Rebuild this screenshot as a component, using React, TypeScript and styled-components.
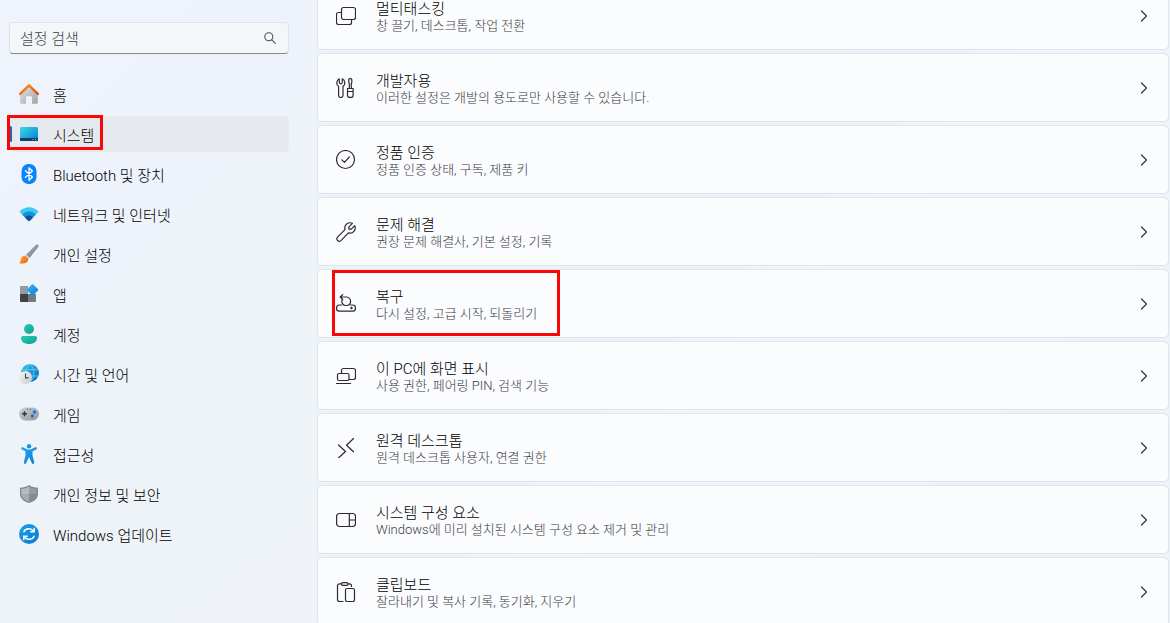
import React from 'react';
import styled, { createGlobalStyle } from 'styled-components';

const GlobalStyle = createGlobalStyle`
  * { box-sizing: border-box; }
  body {
    margin: 0;
    color: #000;
    font-family: Roboto, "Noto Sans CJK KR", sans-serif;
    font-weight: 300;
  }
  button, input { font: inherit; color: inherit; }
`;

const Shell = styled.div`
  display: grid;
  grid-template-columns: 289px 1fr;
  column-gap: 28px;
  height: 100vh;
  overflow: hidden;
  background: linear-gradient(135deg, #eef3fc 0%, #eef3fb 20%, #eef3f7 38%, #eff3fa 60%, #eef2fa 100%);
`;

const Sidebar = styled.aside`
  padding: 22px 0 0 9px;
`;

const SearchBox = styled.label`
  display: flex;
  align-items: center;
  height: 32px;
  padding: 0 12px 0 10px;
  border: 1px solid #e0e4e8;
  border-bottom-color: #868a8e;
  border-radius: 4px;
  background: #f3f7fa;
`;

const SearchInput = styled.input`
  flex: 1;
  min-width: 0;
  padding: 2px 0 0;
  border: 0;
  outline: 0;
  background: transparent;
  font-size: 15px;
  line-height: 20px;
  &::placeholder { color: #3c3f42; opacity: 1; }
`;

const NavList = styled.nav`
  display: flex;
  flex-direction: column;
  gap: 4px;
  margin-top: 22px;
`;

const NavItem = styled.a<{ $active?: boolean }>`
  position: relative;
  display: flex;
  align-items: center;
  gap: 14px;
  height: 36px;
  padding: 0 10px;
  border-radius: 5px;
  background: ${(p) => (p.$active ? '#e6eaee' : 'transparent')};
  color: inherit;
  font-size: 15px;
  line-height: 20px;
  text-decoration: none;
  white-space: nowrap;
`;

const NavLabel = styled.span`
  padding-top: 4px;
`;

const ActiveBar = styled.span`
  position: absolute;
  left: 0;
  top: 10px;
  width: 3px;
  height: 16px;
  border-radius: 2px;
  background: #2a62b0;
`;

const Highlight = styled.span<{ $left: number; $top: number; $width: number; $height: number }>`
  position: absolute;
  left: ${(p) => p.$left}px;
  top: ${(p) => p.$top}px;
  width: ${(p) => p.$width}px;
  height: ${(p) => p.$height}px;
  border: 3px solid #fc0606;
  pointer-events: none;
`;

const Content = styled.main`
  display: flex;
  flex-direction: column;
  gap: 3px;
  margin-top: -19px;
  padding-right: 1px;
`;

const Card = styled.button`
  position: relative;
  display: flex;
  align-items: center;
  flex-shrink: 0;
  gap: 20px;
  width: 100%;
  height: 69px;
  padding: 0 20px 0 18px;
  border: 1px solid #e0e5eb;
  border-radius: 5px;
  background: #fbfcfe;
  text-align: left;
`;

const CardText = styled.span`
  display: flex;
  flex: 1;
  flex-direction: column;
  min-width: 0;
  padding-top: 2px;
  white-space: nowrap;
`;

const CardTitle = styled.span`
  font-size: 15px;
  line-height: 18px;
`;

const CardNote = styled.span`
  color: #3a3b3e;
  font-size: 13px;
  line-height: 16px;
`;

const Icon = ({ children }: { children: React.ReactNode }) => (
  <svg width="20" height="20" viewBox="0 0 20 20" fill="none" aria-hidden="true">{children}</svg>
);

const LineIcon = ({ children }: { children: React.ReactNode }) => (
  <svg width="20" height="20" viewBox="0 0 20 20" fill="none" stroke="#2b2b2d" strokeWidth="1.2" strokeLinecap="round" strokeLinejoin="round" aria-hidden="true">{children}</svg>
);

const Gradient = ({ id, from, to }: { id: string; from: string; to: string }) => (
  <linearGradient id={id} x1="0" y1="0" x2="1" y2="1">
    <stop offset="0" stopColor={from} />
    <stop offset="1" stopColor={to} />
  </linearGradient>
);

const navItems: { label: string; active?: boolean; icon: React.ReactNode }[] = [
  {
    label: '홈',
    icon: (
      <Icon>
        <defs><Gradient id="house" from="#e4e4e4" to="#a2a2a2" /><Gradient id="roof" from="#fb9a1c" to="#d9480f" /></defs>
        <path d="M1.2 9.5 10 2l8.800 7.500V18.500a1.300 1.300 0 0 1-1.300 1.300H13V13.300a1 1 0 0 0-1-1H8a1 1 0 0 0-1 1V19.800H2.500a1.300 1.300 0 0 1-1.300-1.300z" fill="url(#house)" />
        <path d="M1.200 9.800 10 1.400l8.800 8.400" stroke="url(#roof)" strokeWidth="2.400" strokeLinecap="round" strokeLinejoin="round" />
      </Icon>
    ),
  },
  {
    label: '시스템',
    active: true,
    icon: (
      <Icon>
        <defs><Gradient id="screen" from="#37dbe6" to="#0c78cf" /></defs>
        <rect x="1" y="3" width="18" height="14" rx="1.300" fill="url(#screen)" />
        <path d="M1 14h18v1.700a1.300 1.300 0 0 1-1.300 1.300H2.300A1.300 1.300 0 0 1 1 15.700z" fill="#0b4168" />
        <path d="M13.500 15h1v1h-1zM16 15h1v1h-1z" fill="#9cd4ee" />
      </Icon>
    ),
  },
  {
    label: 'Bluetooth 및 장치',
    icon: (
      <Icon>
        <rect x="2.500" width="15" height="20" rx="7" fill="#0a84fa" />
        <path d="M6.400 6.700 13.400 13 10 16.200V3.800L13.400 7 6.400 13.300" stroke="#fff" strokeWidth="1.300" strokeLinejoin="round" strokeLinecap="round" />
      </Icon>
    ),
  },
  {
    label: '네트워크 및 인터넷',
    icon: (
      <Icon>
        <path d="M.4 7.800C5.500 1.700 14.500 1.700 19.600 7.800L10.800 16.700a1.100 1.100 0 0 1-1.600 0z" fill="#3cc9f4" />
        <path d="M3.300 10.700C7 6.300 13 6.300 16.700 10.700L10.800 16.700a1.100 1.100 0 0 1-1.600 0z" fill="#1690dc" />
        <path d="M6 13.400c2.300-2.500 5.700-2.500 8 0l-3.200 3.300a1.100 1.100 0 0 1-1.600 0z" fill="#0b54a0" />
      </Icon>
    ),
  },
  {
    label: '개인 설정',
    icon: (
      <Icon>
        <defs><Gradient id="handle" from="#b3b9c1" to="#6d747e" /><Gradient id="bristle" from="#fbb432" to="#ee5a12" /></defs>
        <path d="M6.700 11 16.800.9c1.500-1.300 3.600.3 2.500 2.200L10.500 14z" fill="url(#handle)" />
        <path d="M6.400 10.800c1.700.5 3.200 1.900 3.800 3.400l-1.200 1.300L5.300 12z" fill="#d9dce0" />
        <path d="M5.500 11.700c2 .3 3.500 1.700 3.700 3.800C9 18.800 4.800 20 .3 19.300c1.900-1.300 1-3.200 1.800-5.200.6-1.500 1.800-2.400 3.400-2.400z" fill="url(#bristle)" />
      </Icon>
    ),
  },
  {
    label: '앱',
    icon: (
      <Icon>
        <defs><Gradient id="appTile" from="#37c4f6" to="#0b70d8" /></defs>
        <path d="M2 2h7v8H1V3a1 1 0 0 1 1-1z" fill="#929aa4" />
        <path d="M1 10h8v8H2a1 1 0 0 1-1-1z" fill="#3e4247" />
        <path d="M9 10h8v7a1 1 0 0 1-1 1H9z" fill="#747a82" />
        <path d="M12.900.4a1 1 0 0 1 1.300 0l4.600 4.700a1 1 0 0 1 0 1.300l-4.600 4.800a1 1 0 0 1-1.300 0L8.200 6.400a1 1 0 0 1 0-1.300z" fill="url(#appTile)" />
      </Icon>
    ),
  },
  {
    label: '계정',
    icon: (
      <Icon>
        <defs><Gradient id="person" from="#27cbb6" to="#10a28f" /></defs>
        <circle cx="10" cy="5" r="5" fill="url(#person)" />
        <path d="M4 12h12a2 2 0 0 1 2 2c0 3.800-3.300 6-8 6s-8-2.200-8-6a2 2 0 0 1 2-2z" fill="url(#person)" />
      </Icon>
    ),
  },
  {
    label: '시간 및 언어',
    icon: (
      <Icon>
        <defs><Gradient id="globe" from="#2fc4ee" to="#0a67bd" /><Gradient id="dial" from="#f7f7f7" to="#c9c9cb" /></defs>
        <circle cx="11" cy="9" r="9" fill="url(#globe)" />
        <path d="M3 5.700h16M3 12h16M11 0C5.800 4.500 5.800 13.500 11 18M11 0c5.200 4.500 5.200 13.500 0 18" stroke="#66d8f6" strokeWidth=".8" />
        <circle cx="6.500" cy="13.400" r="6.500" fill="url(#dial)" />
        <path d="M6.500 9.500v4.400h3.200" stroke="#45484c" strokeWidth="1.100" />
      </Icon>
    ),
  },
  {
    label: '게임',
    icon: (
      <Icon>
        <defs><Gradient id="pad" from="#ced1d5" to="#92989f" /></defs>
        <rect y="3.500" width="20" height="13" rx="6.500" fill="url(#pad)" />
        <path d="M5.500 7.200v5M3 9.700h5" stroke="#33363a" strokeWidth="1.400" />
        <circle cx="15.500" cy="8" r="1.700" fill="#1377d4" /><circle cx="13.300" cy="12" r="1.700" fill="#1377d4" />
        <path d="M8 5.200h1M11 5.200h1" stroke="#44484d" />
      </Icon>
    ),
  },
  {
    label: '접근성',
    icon: (
      <Icon>
        <defs><Gradient id="figure" from="#28a5ee" to="#0a7cd6" /></defs>
        <circle cx="10" cy="2.200" r="2.200" fill="url(#figure)" />
        <path d="M3.700 3.300 7.500 5c1.600.7 3.400.7 5 0l3.800-1.700c1.500-.5 2.300 1.400.9 2.100L13.500 7.200v4.300l1.700 6.800c.3 1.600-1.800 2.300-2.400.8L10.300 13.500h-.6L7.200 19.100c-.6 1.500-2.700.8-2.400-.8l1.700-6.800V7.200L2.800 5.400C1.400 4.700 2.200 2.800 3.700 3.300z" fill="url(#figure)" />
      </Icon>
    ),
  },
  {
    label: '개인 정보 및 보안',
    icon: (
      <Icon>
        <path d="M10 1c2.500 1.900 5.300 2.700 9 2.800V10c0 4.300-3.500 7.500-9 9-5.500-1.500-9-4.700-9-9V3.800C4.700 3.700 7.500 2.900 10 1z" fill="#81868c" />
        <path d="M10 2.400c2.300 1.500 4.700 2.200 7.800 2.400V10c0 3.700-2.900 6.300-7.800 7.700z" fill="#969ba1" />
        <path d="M10 2.400C7.700 3.900 5.300 4.600 2.200 4.800V10H10z" fill="#b8bcc1" />
        <path d="M2.200 10H10v7.700C5.100 16.300 2.200 13.700 2.200 10z" fill="#a6abb0" />
        <path d="M10 10h7.800c0 3.700-2.900 6.300-7.800 7.700z" fill="#858a91" />
      </Icon>
    ),
  },
  {
    label: 'Windows 업데이트',
    icon: (
      <Icon>
        <defs><Gradient id="update" from="#18a4e8" to="#0878d0" /></defs>
        <circle cx="10" cy="10" r="10" fill="url(#update)" />
        <path d="M4.700 8.300C6 4.200 11.700 3.400 14.500 7M15.300 11.700C14 15.800 8.300 16.600 5.500 13M15.200 3.700v4h-4M4.800 16.300v-4h4" stroke="#fff" strokeWidth="1.500" />
      </Icon>
    ),
  },
];

const settings: { title: string; note: string; marked?: boolean; icon: React.ReactNode }[] = [
  {
    title: '멀티태스킹',
    note: '창 끌기, 데스크톱, 작업 전환',
    icon: <LineIcon><rect x="5.500" y="1.500" width="14" height="12" rx="2" /><path d="M5.500 6.500h-3a2 2 0 0 0-2 2v8a2 2 0 0 0 2 2h11a2 2 0 0 0 2-2v-3" /></LineIcon>,
  },
  {
    title: '개발자용',
    note: '이러한 설정은 개발의 용도로만 사용할 수 있습니다.',
    icon: (
      <LineIcon>
        <path d="M3.300.8C.2 2.400 0 6.800 2.600 8.600V17.300a2.200 2.200 0 0 0 4.400 0V8.600C9.600 6.800 9.400 2.400 6.300.8V4.300a1.500 1.500 0 0 1-3 0z" />
        <path d="M12.800 1.700a1 1 0 0 1 1-1h1a1 1 0 0 1 1 1V4.500l-.5 1.300V10.500h-2V5.800l-.5-1.300zM11.500 10.500h5.600v6.700a2.200 2.200 0 0 1-2.200 2.200h-1.200a2.200 2.200 0 0 1-2.200-2.200zM11.500 13.500h5.600" />
      </LineIcon>
    ),
  },
  {
    title: '정품 인증',
    note: '정품 인증 상태, 구독, 제품 키',
    icon: <LineIcon><circle cx="9.500" cy="9.500" r="9" /><path d="m5.800 9.800 2.600 2.600L13.300 7" /></LineIcon>,
  },
  {
    title: '문제 해결',
    note: '권장 문제 해결사, 기본 설정, 기록',
    icon: <LineIcon><path d="M16.400 1.300 12.900 4.800V7.100h2.300l3.500-3.500c1.800 4.100-1.700 8.600-6.300 7.300L5 18.600c-2.300 2-5.500-1.100-3.500-3.500L9 7.600C7.700 3 12.200-.5 16.400 1.300z" /></LineIcon>,
  },
  {
    title: '복구',
    note: '다시 설정, 고급 시작, 되돌리기',
    marked: true,
    icon: (
      <LineIcon>
        <path d="M5.700 11H3.400C1.500 11 .6 12.200.6 13.800v1c0 1.400 1 2.400 2.400 2.400h14c1.400 0 2.400-1 2.400-2.400v-1c0-1.600-.9-2.800-2.800-2.800h-2.300" />
        <path d="M4.200 3h6.300c5 .6 5.500 7.400.7 8.500H9.300C6.500 11 5.300 8.200 6.100 5.800M6.700.6 4.200 3l2.500 2.500" />
        <circle cx="15.500" cy="14" r=".6" fill="#2b2b2d" />
      </LineIcon>
    ),
  },
  {
    title: '이 PC에 화면 표시',
    note: '사용 권한, 페어링 PIN, 검색 기능',
    icon: <LineIcon><path d="M5.500 7V4.500a2 2 0 0 1 2-2h10a2 2 0 0 1 2 2v7a2 2 0 0 1-2 2H13" /><rect x="1.500" y="7.500" width="11.500" height="7" rx="1.500" /><path d="M.5 17.500h14" /></LineIcon>,
  },
  {
    title: '원격 데스크톱',
    note: '원격 데스크톱 사용자, 연결 권한',
    icon: <LineIcon><path d="m2.500 7 7 6.500-7 6.500M17.500.5l-7 6.700 7 6.600" /></LineIcon>,
  },
  {
    title: '시스템 구성 요소',
    note: 'Windows에 미리 설치된 시스템 구성 요소 제거 및 관리',
    icon: <LineIcon><rect x=".6" y="3.500" width="18.900" height="13" rx="3" /><path d="M13.300 3.500v13M13.300 10h6.200" /></LineIcon>,
  },
  {
    title: '클립보드',
    note: '잘라내기 및 복사 기록, 동기화, 지우기',
    icon: (
      <LineIcon>
        <path d="M5.500 1.800h-2a2 2 0 0 0-2 2v13.700a2 2 0 0 0 2 2H7M12 1.800h1.500a2 2 0 0 1 2 2v.7" />
        <rect x="5.500" y=".6" width="6.500" height="2.700" rx="1.300" />
        <rect x="9.500" y="6.500" width="9" height="13" rx="1.800" />
      </LineIcon>
    ),
  },
];

export default function App() {
  return (
    <>
      <GlobalStyle />
      <Shell>
        <Sidebar>
          <SearchBox>
            <SearchInput type="text" placeholder="설정 검색" aria-label="설정 검색" />
            <svg width="12" height="12" viewBox="0 0 12 12" fill="none" stroke="#4c4f52" strokeWidth="1.100" strokeLinecap="round" aria-hidden="true">
              <circle cx="4.800" cy="4.800" r="4" /><path d="m7.800 7.800 3.500 3.500" />
            </svg>
          </SearchBox>
          <NavList>
            {navItems.map((item) => (
              <NavItem key={item.label} href="#" $active={item.active}>
                {item.active && <ActiveBar />}
                {item.icon}
                <NavLabel>{item.label}</NavLabel>
                {item.active && <Highlight $left={-2} $top={-1} $width={96} $height={35} />}
              </NavItem>
            ))}
          </NavList>
        </Sidebar>
        <Content>
          {settings.map((item) => (
            <Card key={item.title} type="button">
              {item.icon}
              <CardText>
                <CardTitle>{item.title}</CardTitle>
                <CardNote>{item.note}</CardNote>
              </CardText>
              <svg width="8" height="12" viewBox="0 0 8 12" fill="none" stroke="#3c3c3e" strokeWidth="1.300" strokeLinecap="round" strokeLinejoin="round" aria-hidden="true">
                <path d="m1.500 1 5 5-5 5" />
              </svg>
              {item.marked && <Highlight $left={14} $top={0} $width={228} $height={66} />}
            </Card>
          ))}
        </Content>
      </Shell>
    </>
  );
}
